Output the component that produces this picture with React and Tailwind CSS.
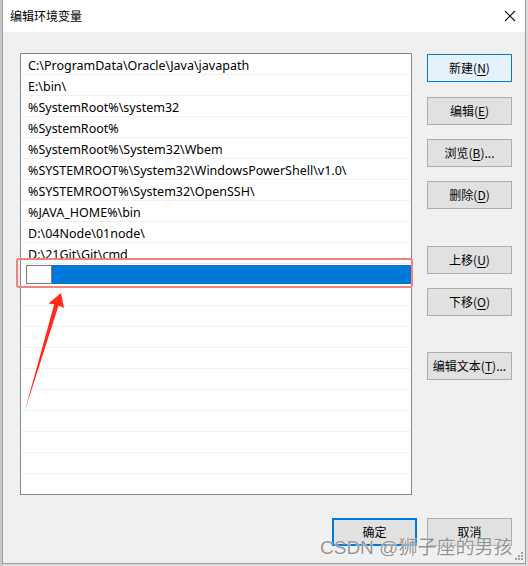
import React from 'react'

const paths = [
  'C:\\ProgramData\\Oracle\\Java\\javapath',
  'E:\\bin\\',
  '%SystemRoot%\\system32',
  '%SystemRoot%',
  '%SystemRoot%\\System32\\Wbem',
  '%SYSTEMROOT%\\System32\\WindowsPowerShell\\v1.0\\',
  '%SYSTEMROOT%\\System32\\OpenSSH\\',
  '%JAVA_HOME%\\bin',
  'D:\\04Node\\01node\\',
  'D:\\21Git\\Git\\cmd'
]

const emptyRows = Array.from({ length: 10 })

function Btn({ label, hot, rest = ')', top, focused }) {
  return (
    <div
      className={`flex h-[28px] w-[85px] items-center justify-center border ${
        focused ? 'border-[#0078d7] bg-[#e5f1fb]' : 'border-[#adadad] bg-[#e1e1e1]'
      } ${top}`}
    >
      <span>
        {label}(<span className="underline underline-offset-2">{hot}</span>{rest}
      </span>
    </div>
  )
}

export default function App() {
  return (
    <div className="relative flex h-[566px] w-[528px] bg-[#dcdcdc] text-[12px] text-black [font-family:'Segoe_UI','Noto_Sans','Noto_Sans_CJK_SC',sans-serif]">
      <div className="w-[2px] bg-[#c8c8c8]" />
      <div className="flex h-[564px] w-[524px] flex-col border-x border-b border-[#9a9a9a] bg-[#f0f0f0]">
        {/* title bar */}
        <div className="flex h-[32px] items-center justify-between bg-white pl-[7px] pr-[8px]">
          <span className="[font-family:'Noto_Sans_CJK_SC',sans-serif]">编辑环境变量</span>
          <svg width="12" height="12" viewBox="0 0 12 12" className="mr-[1px]">
            <path d="M1 1 L11 11 M11 1 L1 11" stroke="#111" strokeWidth="1.1" />
          </svg>
        </div>

        <div className="flex pl-[17px] pt-[21px]">
          {/* list box */}
          <div className="h-[442px] w-[392px] overflow-hidden border border-[#828790] bg-white">
            {paths.map((p) => (
              <div key={p} className="mx-[1px] h-[21px] border-b border-[#f0f0f0] pl-[6px] pt-[3px] text-[12.5px] leading-[17px]">
                {p}
              </div>
            ))}
            <div className="flex h-[21px] items-center py-[1px]">
              <div className="ml-[5px] h-[19px] w-[26px] border border-[#7a7a7a] bg-white" />
              <div className="h-[19px] flex-1 bg-[#0078d7]" />
            </div>
            {emptyRows.map((_, i) => (
              <div key={i} className="mx-[1px] h-[21px] border-b border-[#f0f0f0]" />
            ))}
          </div>

          {/* buttons column */}
          <div className="ml-[15px] flex flex-col [font-family:'Noto_Sans_CJK_SC',sans-serif]">
            <Btn label="新建" hot="N" top="mt-[1px]" focused />
            <Btn label="编辑" hot="E" top="mt-[15px]" />
            <Btn label="浏览" hot="B" rest=")..." top="mt-[14px]" />
            <Btn label="删除" hot="D" top="mt-[14px]" />
            <Btn label="上移" hot="U" top="mt-[37px]" />
            <Btn label="下移" hot="O" top="mt-[14px]" />
            <Btn label="编辑文本" hot="T" rest=")..." top="mt-[36px]" />
          </div>
        </div>

        {/* bottom buttons */}
        <div className="mt-[23px] flex justify-end gap-[10px] pr-[13px] [font-family:'Noto_Sans_CJK_SC',sans-serif]">
          <div className="flex h-[28px] w-[85px] items-center justify-center border-2 border-[#0078d7] bg-[#e1e1e1]">
            确定
          </div>
          <div className="flex h-[28px] w-[85px] items-center justify-center border border-[#adadad] bg-[#e1e1e1]">
            取消
          </div>
        </div>
      </div>

      {/* highlight box */}
      <div className="absolute left-[16px] top-[258px] h-[30px] w-[397px] rounded-[3px] border-2 border-[#f2837c]" />

      {/* red arrow */}
      <svg className="absolute left-0 top-0" width="528" height="566" viewBox="0 0 528 566">
        <polygon points="61,293 64,308 58.6,305.5 24.5,412 54.2,304.2 48.5,303.5" fill="#ff2a1a" />
      </svg>

      {/* size grip */}
      <svg className="absolute left-[514px] top-[551px]" width="10" height="10" viewBox="0 0 10 10">
        {[[8, 2], [5, 5], [8, 5], [2, 8], [5, 8], [8, 8]].map(([x, y]) => (
          <rect key={`${x}-${y}`} x={x - 1} y={y - 1} width="2" height="2" fill="#a0a0a0" />
        ))}
      </svg>

      {/* watermark */}
      <div className="absolute left-[320px] top-[536px] text-[19px] leading-[24px] text-[rgba(110,110,110,0.75)] [font-family:'Liberation_Sans','Noto_Sans_CJK_SC',sans-serif] [text-shadow:0_0_1px_#fff,0_0_1px_#fff]">
        CSDN @狮子座的男孩
      </div>
    </div>
  )
}
